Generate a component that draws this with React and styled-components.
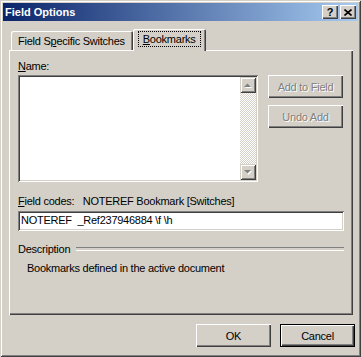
import React from "react";
import styled, { createGlobalStyle, css } from "styled-components";

const face = "#D4D0C8";
const shadow = "#808080";
const dark = "#404040";

const GlobalStyle = createGlobalStyle`
  html, body {
    margin: 0;
    padding: 0;
    background: ${face};
  }
  body {
    font-family: "Liberation Sans", Arial, sans-serif;
    font-size: 11px;
    letter-spacing: -0.25px;
    color: #000;
  }
  * {
    box-sizing: border-box;
  }
`;

const raised = css`
  box-shadow: inset 1px 1px #fff, inset -1px -1px ${dark},
    inset -2px -2px ${shadow};
`;

const sunken = css`
  box-shadow: inset 1px 1px ${shadow}, inset -1px -1px #fff,
    inset 2px 2px ${dark}, inset -2px -2px ${face};
`;

const Window = styled.div`
  width: 361px;
  height: 357px;
  padding: 3px;
  display: flex;
  flex-direction: column;
  background: ${face};
  box-shadow: inset 1px 1px ${face}, inset -1px -1px ${dark},
    inset 2px 2px #fff, inset -2px -2px ${shadow};
`;

const TitleBar = styled.div`
  height: 18px;
  display: flex;
  align-items: center;
  padding: 0 2px 0 2px;
  background: linear-gradient(to right, #0a246a, #a6caf0);
  color: #fff;
  font-weight: bold;
  font-size: 11px;
  letter-spacing: 0;
  h1 {
    flex: 1;
    margin: 0;
    font-size: inherit;
    white-space: nowrap;
  }
`;

const CaptionButton = styled.button`
  width: 16px;
  height: 14px;
  padding: 0;
  margin-left: ${(p) => (p.$gap ? "2px" : "0")};
  border: none;
  background: ${face};
  ${raised};
  display: flex;
  align-items: center;
  justify-content: center;
  font-family: "Liberation Sans", Arial, sans-serif;
  font-weight: bold;
  font-size: 11px;
  line-height: 1;
  color: #000;
`;

const Content = styled.div`
  flex: 1;
  display: flex;
  flex-direction: column;
  padding: 8px 2px 0 6px;
`;

const TabRow = styled.div`
  height: 21px;
  display: flex;
  align-items: flex-end;
  padding-left: 2px;
`;

const Tab = styled.div`
  position: relative;
  display: flex;
  align-items: center;
  background: ${face};
  border-radius: 2px 2px 0 0;
  white-space: nowrap;
  box-shadow: inset 1px 1px #fff, inset -1px 0 ${dark}, inset -2px 0 ${shadow};
  ${(p) =>
    p.$active
      ? css`
          z-index: 1;
          height: 22px;
          margin-bottom: -1px;
          padding: 0 5px 2px 5px;
        `
      : css`
          height: 19px;
          padding: 0 8px 0 7px;
        `}
`;

const Focus = styled.span`
  padding: 2px 5px 2px 5px;
  outline: 1px dotted #000;
  outline-offset: -1px;
`;

const Panel = styled.div`
  width: 344px;
  height: 265px;
  padding: 10px 9px 0 9px;
  display: flex;
  flex-direction: column;
  box-shadow: inset 1px 1px #fff, inset -1px -1px ${dark},
    inset -2px -2px ${shadow};
`;

const Label = styled.div`
  height: 13px;
  line-height: 13px;
  white-space: pre;
  margin-top: ${(p) => p.$top || 0}px;
  margin-bottom: ${(p) => p.$bottom || 0}px;
`;

const ListRow = styled.div`
  display: flex;
  gap: 10px;
  height: 107px;
`;

const ListBox = styled.div`
  width: 240px;
  height: 107px;
  padding: 2px;
  background: #fff;
  display: flex;
  justify-content: flex-end;
  ${sunken};
`;

const ScrollBar = styled.div`
  width: 16px;
  display: flex;
  flex-direction: column;
  justify-content: space-between;
  background-color: ${face};
  background-image: conic-gradient(#fff 25%, ${face} 0 50%, #fff 0 75%, ${face} 0);
  background-size: 2px 2px;
`;

const ArrowButton = styled.div`
  width: 16px;
  height: 16px;
  background: ${face};
  box-shadow: inset 1px 1px ${face}, inset -1px -1px ${dark},
    inset 2px 2px #fff, inset -2px -2px ${shadow};
  display: flex;
  align-items: center;
  justify-content: center;
`;

const ButtonColumn = styled.div`
  display: flex;
  flex-direction: column;
  gap: 7px;
`;

const Button = styled.button`
  width: 75px;
  height: 23px;
  padding: 0;
  border: none;
  background: ${face};
  font-family: "Liberation Sans", Arial, sans-serif;
  font-size: 11px;
  letter-spacing: -0.25px;
  color: ${(p) => (p.disabled ? shadow : "#000")};
  text-shadow: ${(p) => (p.disabled ? "1px 1px #fff" : "none")};
  ${(p) =>
    p.$default
      ? css`
          box-shadow: inset 0 0 0 1px #000, inset 2px 2px #fff,
            inset -2px -2px ${dark}, inset -3px -3px ${shadow};
        `
      : raised};
`;

const CodeInput = styled.div`
  height: 20px;
  padding: 3px 4px 0 3px;
  line-height: 13px;
  background: #fff;
  white-space: pre;
  ${sunken};
`;

const Divider = styled.div`
  display: flex;
  align-items: center;
  gap: 6px;
  height: 13px;
  margin-top: 11px;
  &::after {
    content: "";
    flex: 1;
    height: 2px;
    border-top: 1px solid ${shadow};
    border-bottom: 1px solid #fff;
  }
`;

const Description = styled.div`
  margin-top: 7px;
  padding-left: 9px;
  line-height: 13px;
`;

const Footer = styled.div`
  display: flex;
  justify-content: flex-end;
  gap: 9px;
  margin-top: 9px;
  padding-right: 1px;
`;

const UpArrow = () => (
  <svg width="8" height="5" viewBox="0 0 8 5">
    <polygon points="1,5 8,5 4.5,1.5" fill="#fff" />
    <polygon points="0,4 7,4 3.5,0.5" fill={shadow} />
  </svg>
);

const DownArrow = () => (
  <svg width="8" height="5" viewBox="0 0 8 5">
    <polygon points="1,1 8,1 4.5,5" fill="#fff" />
    <polygon points="0,0 7,0 3.5,3.5" fill={shadow} />
  </svg>
);

const CloseGlyph = () => (
  <svg width="8" height="7" viewBox="0 0 8 7">
    <path d="M0.5 0.5 L7.5 6.5 M7.5 0.5 L0.5 6.5" stroke="#000" strokeWidth="1.6" />
  </svg>
);

export default function App() {
  return (
    <>
      <GlobalStyle />
      <Window>
        <TitleBar>
          <h1>Field Options</h1>
          <CaptionButton>?</CaptionButton>
          <CaptionButton $gap>
            <CloseGlyph />
          </CaptionButton>
        </TitleBar>
        <Content>
          <TabRow>
            <Tab>
              Field S<u>p</u>ecific Switches
            </Tab>
            <Tab $active>
              <Focus>
                <u>B</u>ookmarks
              </Focus>
            </Tab>
          </TabRow>
          <Panel>
            <Label $bottom={2}>
              <u>N</u>ame:
            </Label>
            <ListRow>
              <ListBox>
                <ScrollBar>
                  <ArrowButton>
                    <UpArrow />
                  </ArrowButton>
                  <ArrowButton>
                    <DownArrow />
                  </ArrowButton>
                </ScrollBar>
              </ListBox>
              <ButtonColumn>
                <Button disabled>Add to Field</Button>
                <Button disabled>Undo Add</Button>
              </ButtonColumn>
            </ListRow>
            <Label $top={13} $bottom={3}>
              <u>F</u>ield codes:{"   "}NOTEREF Bookmark [Switches]
            </Label>
            <CodeInput>NOTEREF  _Ref237946884 \f \h</CodeInput>
            <Divider>Description</Divider>
            <Description>Bookmarks defined in the active document</Description>
          </Panel>
          <Footer>
            <Button>OK</Button>
            <Button $default>Cancel</Button>
          </Footer>
        </Content>
      </Window>
    </>
  );
}
